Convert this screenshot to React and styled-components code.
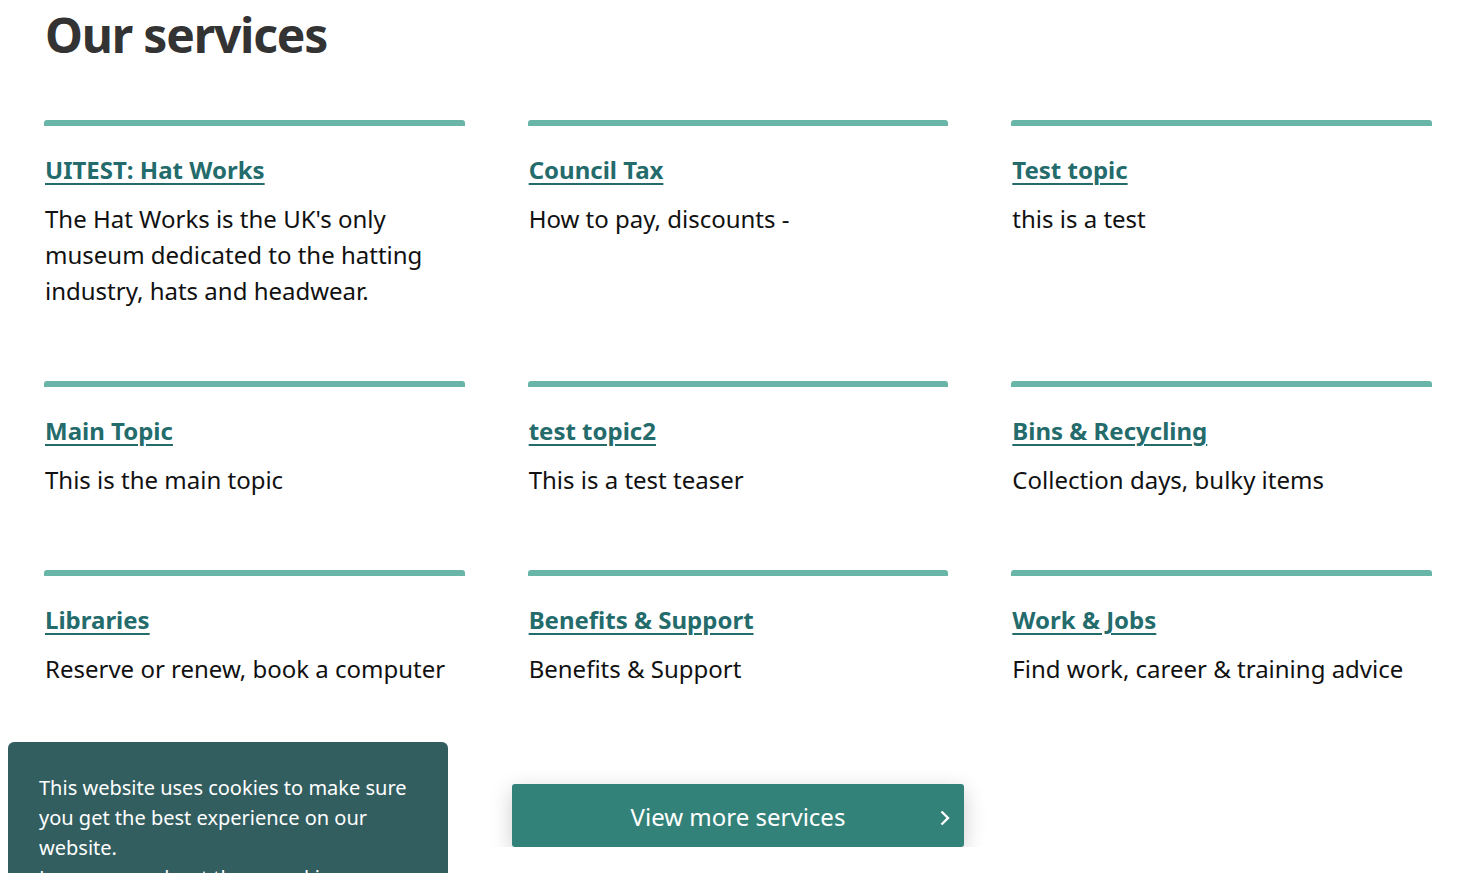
import React from "react"
import styled, { createGlobalStyle } from "styled-components"

const services = [
  {
    title: "UITEST: Hat Works",
    description:
      "The Hat Works is the UK's only museum dedicated to the hatting industry, hats and headwear.",
  },
  { title: "Council Tax", description: "How to pay, discounts -" },
  { title: "Test topic", description: "this is a test" },
  { title: "Main Topic", description: "This is the main topic" },
  { title: "test topic2", description: "This is a test teaser" },
  { title: "Bins & Recycling", description: "Collection days, bulky items" },
  { title: "Libraries", description: "Reserve or renew, book a computer" },
  { title: "Benefits & Support", description: "Benefits & Support" },
  { title: "Work & Jobs", description: "Find work, career & training advice" },
]

const App = () => {
  return (
    <>
      <GlobalStyle />
      <StyledSection>
        <Heading>Our services</Heading>
        <Grid>
          {services.map(item => (
            <Card key={item.title}>
              <CardTitle href="#">{item.title}</CardTitle>
              <CardDesc>{item.description}</CardDesc>
            </Card>
          ))}
        </Grid>
        <ButtonRow>
          <MoreButton href="#">
            View more services
            <Chevron viewBox="0 0 10 16" aria-hidden="true">
              <path d="M1.5 1.5l6.5 6.5-6.5 6.5" />
            </Chevron>
          </MoreButton>
        </ButtonRow>
      </StyledSection>
      <CookieBanner>
        <p>
          This website uses cookies to make sure you get the best experience on
          our website.
          <br />
          <a href="#">Learn more about these cookies</a>
        </p>
      </CookieBanner>
    </>
  )
}

const GlobalStyle = createGlobalStyle`
  body {
    margin: 0;
    background: #fff;
    font-family: "Noto Sans", "Open Sans", sans-serif;
  }
`

const StyledSection = styled.section`
  padding: 0 43px 0 44px;
`

const Heading = styled.h2`
  margin: 0;
  padding: 3px 0 0 1px;
  font-size: 48px;
  line-height: 64px;
  font-weight: 700;
  letter-spacing: -1.2px;
  color: #333333;
`

const Grid = styled.div`
  display: grid;
  grid-template-columns: repeat(3, 1fr);
  column-gap: 63px;
  row-gap: 72px;
  margin-top: 53px;
`

const Card = styled.div`
  border-top: 6px solid #69b5a7;
  border-radius: 3px 3px 0 0;
  padding: 26px 0 0 1px;
`

const CardTitle = styled.a`
  display: inline-block;
  margin-bottom: 13px;
  font-size: 24px;
  line-height: 36px;
  font-weight: 700;
  color: #246b6c;
  text-decoration: underline;
  text-decoration-thickness: 2px;
  text-underline-offset: 4px;
`

const CardDesc = styled.p`
  margin: 0;
  font-size: 24px;
  line-height: 36px;
  color: #111111;
`

const ButtonRow = styled.div`
  display: flex;
  justify-content: center;
  margin-top: 97px;
`

const MoreButton = styled.a`
  position: relative;
  display: flex;
  align-items: center;
  justify-content: center;
  width: 452px;
  height: 63px;
  padding-top: 2px;
  box-sizing: border-box;
  background: #33827a;
  border-radius: 3px;
  box-shadow: 0 6px 22px rgba(0, 0, 0, 0.2);
  color: #ffffff;
  font-size: 24px;
  text-decoration: none;
`

const Chevron = styled.svg`
  position: absolute;
  right: 14px;
  top: 26px;
  width: 10px;
  height: 16px;
  fill: none;
  stroke: #ffffff;
  stroke-width: 2.4;
`

const CookieBanner = styled.div`
  position: fixed;
  left: 8px;
  top: 742px;
  width: 440px;
  height: 220px;
  box-sizing: border-box;
  padding: 31px 31px;
  background: #325e60;
  border-radius: 6px 6px 0 0;
  color: #ffffff;

  p {
    margin: 0;
    font-size: 20px;
    line-height: 30px;
  }

  a {
    color: #ffffff;
  }
`

export default App
